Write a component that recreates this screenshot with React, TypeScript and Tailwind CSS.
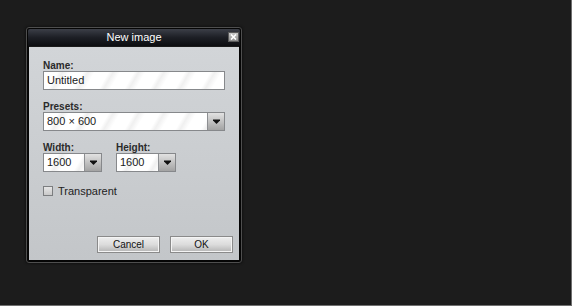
import React from 'react';

const font = "font-['Liberation_Sans',Arial,sans-serif]";

const stripes =
  'bg-[repeating-linear-gradient(120deg,#ffffff_0px,#ffffff_12px,#f0f0f0_16px,#ffffff_22px)]';

const Arrow: React.FC = () => (
  <div className="w-[17px] h-full shrink-0 border-l border-[#8d8f92] bg-gradient-to-b from-[#e2e2e2] to-[#a3a3a3] flex items-center justify-center">
    <svg width="7" height="5" viewBox="0 0 7 5">
      <path d="M0 0.5h7v1L3.5 5 0 1.5z" fill="#111" />
    </svg>
  </div>
);

const Label: React.FC<{ children: React.ReactNode }> = ({ children }) => (
  <div className="text-[10px] leading-[10px] font-bold text-[#2a2a2a]">{children}</div>
);

const Field: React.FC<{ value: string; width: string; arrow?: boolean }> = ({ value, width, arrow }) => (
  <div className={`${width} h-[19px] flex border border-[#86888b] ${stripes}`}>
    <div className="flex-1 px-[3px] text-[11px] leading-[17px] text-[#1a1a1a]">{value}</div>
    {arrow && <Arrow />}
  </div>
);

const Button: React.FC<{ label: string }> = ({ label }) => (
  <div className="w-[63px] h-[17px] border border-[#8a8a8a] shadow-[inset_0_0_0_1px_#f4f4f4] bg-gradient-to-b from-[#eeeeee] via-[#dcdcdc] to-[#b4b4b4] flex items-center justify-center text-[10px] text-[#111]">
    {label}
  </div>
);

export default function App() {
  return (
    <div className={`w-[572px] h-[306px] bg-[#1c1c1c] border-r border-b border-[#6f6f6f] pt-[27px] pl-[26px] ${font}`}>
      <div className="w-[216px] h-[236px] flex flex-col border border-[#4e4e4e] rounded-[3px] bg-[#050505] p-[2px] pt-[1px] shadow-[0_0_3px_rgba(0,0,0,0.8)]">
        <div className="h-[17px] shrink-0 -mx-[1px] rounded-t-[2px] bg-gradient-to-b from-[#3c3f48] via-[#1d1f25] to-[#0c0d10] flex items-center relative">
          <div className="flex-1 text-center text-[11px] leading-[17px] text-white">New image</div>
          <div className="absolute right-[1px] top-[3px] w-[11px] h-[10px] border border-[#5a5a5a] bg-gradient-to-b from-[#c8c8c8] to-[#8c8c8c] flex items-center justify-center">
            <svg width="7" height="6" viewBox="0 0 7 6">
              <path d="M1 0.5l5 5M6 0.5l-5 5" stroke="#fff" strokeWidth="1.6" />
            </svg>
          </div>
        </div>
        <div className="flex-1 flex flex-col bg-gradient-to-b from-[#d2d5d8] to-[#c3c6c9] border-t border-[#1a1a1a]">
          <div className="flex flex-col px-[14px] pt-[14px]">
            <Label>Name:</Label>
            <Field value="Untitled" width="w-[182px]" />
            <div className="mt-[12px]">
              <Label>Presets:</Label>
            </div>
            <Field value="800 × 600" width="w-[182px]" arrow />
            <div className="flex gap-[14px] mt-[12px]">
              <div className="flex flex-col">
                <Label>Width:</Label>
                <Field value="1600" width="w-[59px]" arrow />
              </div>
              <div className="flex flex-col">
                <Label>Height:</Label>
                <Field value="1600" width="w-[60px]" arrow />
              </div>
            </div>
            <div className="flex items-center gap-[5px] mt-[13px]">
              <div className="w-[10px] h-[10px] border border-[#7c7e80] bg-gradient-to-b from-[#e6e6e6] to-[#c9c9c9]" />
              <span className="text-[11px] leading-[12px] text-[#222]">Transparent</span>
            </div>
          </div>
          <div className="mt-auto flex justify-end gap-[10px] pr-[6px] pb-[7px]">
            <Button label="Cancel" />
            <Button label="OK" />
          </div>
        </div>
      </div>
    </div>
  );
}
